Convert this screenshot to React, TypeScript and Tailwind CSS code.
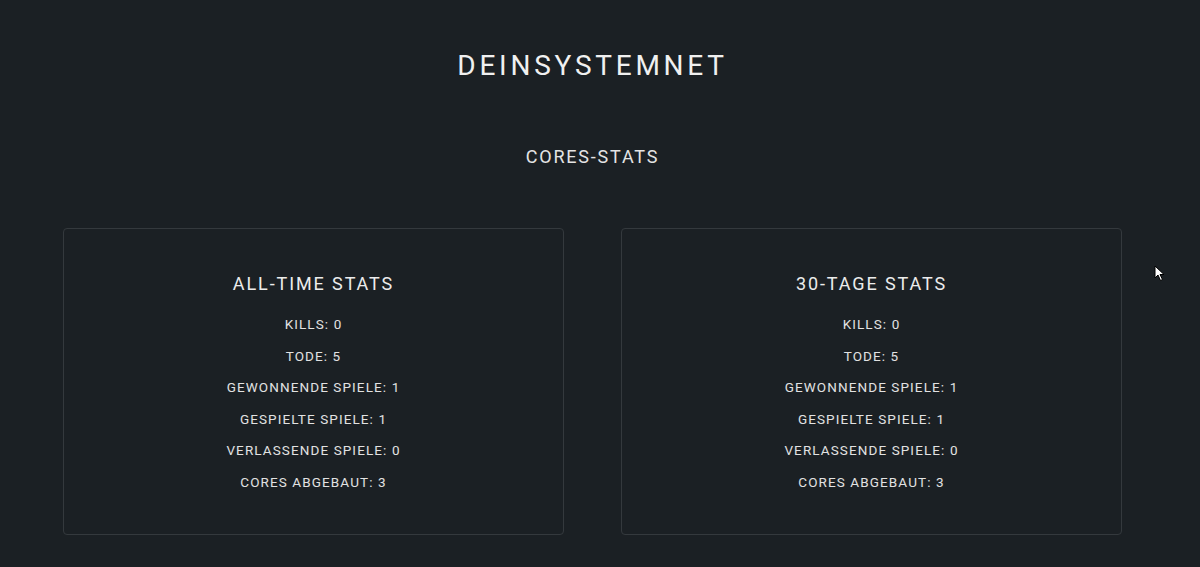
const allTime = [
  { label: 'Kills', value: 0 },
  { label: 'Tode', value: 5 },
  { label: 'Gewonnende Spiele', value: 1 },
  { label: 'Gespielte Spiele', value: 1 },
  { label: 'Verlassende Spiele', value: 0 },
  { label: 'Cores abgebaut', value: 3 },
]

const thirtyDays = [
  { label: 'Kills', value: 0 },
  { label: 'Tode', value: 5 },
  { label: 'Gewonnende Spiele', value: 1 },
  { label: 'Gespielte Spiele', value: 1 },
  { label: 'Verlassende Spiele', value: 0 },
  { label: 'Cores abgebaut', value: 3 },
]

interface StatCardProps {
  title: string
  stats: { label: string; value: number }[]
}

function StatCard({ title, stats }: StatCardProps) {
  return (
    <div className="flex w-[501px] flex-col items-center rounded-[4px] border border-[#34393d] pt-[41px] pb-[35px]">
      <h2 className="text-[18px] leading-[28px] tracking-[1.9px] uppercase text-[#ececec]">{title}</h2>
      <ul className="mt-[11px] flex flex-col items-center">
        {stats.map((s) => (
          <li key={s.label} className="h-[31.6px] text-[13.5px] leading-[31.6px] tracking-[1.1px] uppercase text-[#e2e2e2]">
            {s.label}: {s.value}
          </li>
        ))}
      </ul>
    </div>
  )
}

export default function App() {
  return (
    <div className="relative h-[567px] w-[1200px] overflow-hidden bg-[#1b2024] font-['Roboto',sans-serif]">
      <div className="flex w-[1185px] flex-col items-center pt-[46px]">
        <h1 className="text-[28px] leading-[40px] tracking-[3.75px] text-[#f0f0f0]">DEINSYSTEMNET</h1>
        <h3 className="mt-[57px] text-[18px] leading-[28px] tracking-[1.8px] text-[#e4e4e4]">CORES-STATS</h3>
        <div className="mt-[57px] flex gap-[57px]">
          <StatCard title="All-Time Stats" stats={allTime} />
          <StatCard title="30-Tage Stats" stats={thirtyDays} />
        </div>
      </div>
      <svg className="absolute left-[1154px] top-[265px]" width="11" height="17" viewBox="0 0 11 17">
        <path d="M1 1 L1 13 L4 10 L6.5 15.5 L8.5 14.5 L6 9.5 L10 9.5 Z" fill="#ffffff" stroke="#000000" strokeWidth="1" strokeLinejoin="round" />
      </svg>
    </div>
  )
}
